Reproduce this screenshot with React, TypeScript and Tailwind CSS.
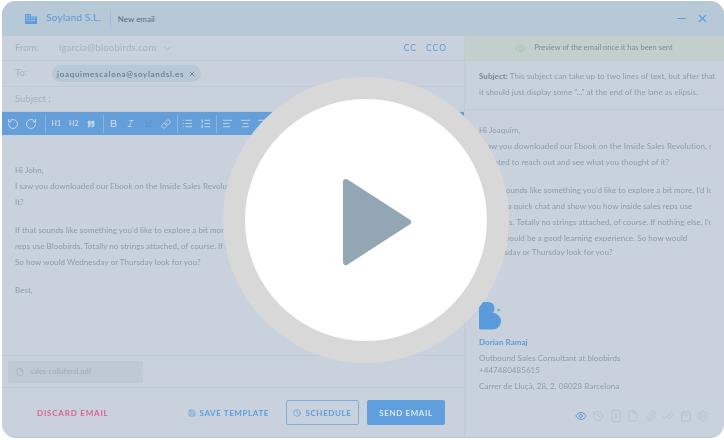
import {
  AlignCenter,
  AlignLeft,
  AlignRight,
  Bold,
  Calendar,
  CheckCheck,
  ChevronDown,
  Clock,
  Eye,
  File,
  History,
  Italic,
  Link,
  List,
  ListOrdered,
  Minus,
  Paperclip,
  Quote,
  RotateCcw,
  RotateCw,
  Save,
  Settings,
  Underline,
  X,
} from 'lucide-react';

function CompanyIcon() {
  return (
    <svg width="12" height="12" viewBox="0 0 12 12" className="text-[#5b9ddd]" fill="currentColor">
      <path d="M0 1h6v2.500h6V11H0zM1.200 2.200v1.200h1.200V2.200zm2.400 0v1.200h1.200V2.200zM1.200 4.600v1.200h1.200V4.600zm2.400 0v1.200h1.200V4.600zm2.600 0v1.200h1.400V4.600zm2.600 0v1.200h1.200V4.600zM1.200 7v1.200h1.200V7zm2.400 0v1.200h1.200V7zm2.600 0v1.200h1.400V7zm2.600 0v1.200h1.200V7z" fillRule="evenodd" />
    </svg>
  );
}

function Logo() {
  return (
    <svg width="23" height="28" viewBox="0 0 23 28">
      <path d="M1 0H9C13 0 15.500 3 15.500 6C15.500 8 15 9.500 14 10.700C19 11.500 22 15 22 19C22 24 18 27.500 13 27.500H1.500A1.500 1.500 0 0 1 0 26V1A1 1 0 0 1 1 0Z" fill="#5a9bdc" />
      <circle cx="19.700" cy="8" r="1.500" fill="#62bfd0" />
    </svg>
  );
}

function DollarFile() {
  return (
    <svg width="12" height="12" viewBox="0 0 12 12" fill="none" stroke="currentColor" strokeWidth="1">
      <rect x="2" y="0.500" width="8" height="11" rx="1" />
      <path d="M7.200 4.300C7 3.800 6.500 3.500 6 3.500C5.300 3.500 4.800 3.900 4.800 4.500C4.800 5.900 7.300 5.200 7.300 6.800C7.300 7.500 6.700 7.900 6 7.900C5.400 7.900 4.900 7.600 4.700 7.100M6 2.800V8.800" strokeWidth="0.700" />
    </svg>
  );
}

function Sep({ className }: { className: string }) {
  return <span className={`h-[18px] w-px shrink-0 bg-[#8bb6e0] ${className}`} />;
}

function Cell({ children, className }: { children: React.ReactNode; className?: string }) {
  return <span className={`flex w-[17.5px] shrink-0 items-center justify-center ${className ?? ''}`}>{children}</span>;
}

function Row({ children, className }: { children: React.ReactNode; className: string }) {
  return <div className={`flex items-center border-b border-[#c1cbd6] ${className}`}>{children}</div>;
}

export default function App() {
  return (
    <div className="relative h-[440px] w-[724px] overflow-hidden bg-white font-['Lato',sans-serif]">
      <div className="ml-[2px] mt-px flex h-[437px] w-[722px] flex-col overflow-hidden rounded-[14px] border-b border-[#bcc7d2] bg-[#c9d2dc] blur-[0.35px]">
        {/* Header */}
        <div className="flex h-[35px] shrink-0 items-center bg-[#b7c8d6] pr-[15px]">
          <div className="ml-[23px] mr-[9px]">
            <CompanyIcon />
          </div>
          <span className="mb-[4px] text-[10px] leading-none tracking-[0.2px] text-[#5b9ddd]">Soyland S.L.</span>
          <span className="ml-[9px] mr-[7px] h-[16px] w-px bg-[#9fbcd6]" />
          <span className="text-[8px] text-[#5c6c7c]">New email</span>
          <Minus className="ml-auto h-[13px] w-[13px] text-[#5b9ddd]" strokeWidth={2} />
          <X className="ml-[8px] h-[13px] w-[13px] text-[#5b9ddd]" strokeWidth={2} />
        </div>

        <div className="flex min-h-0 flex-1">
          {/* Compose column */}
          <div className="flex w-[462px] shrink-0 flex-col">
            <Row className="h-[25px] text-[9.500px] text-[#a5b1bd]">
              <span className="ml-[13px] w-[44px]">From:</span>
              <span className="tracking-[0.2px]">igarcia@bloobirds.com</span>
              <ChevronDown className="ml-[6px] h-[11px] w-[11px]" />
              <span className="ml-auto text-[8.500px] tracking-[1px] text-[#5b9ddd]">CC</span>
              <span className="ml-[9px] mr-[17px] text-[8.500px] tracking-[1px] text-[#5b9ddd]">CCO</span>
            </Row>
            <Row className="h-[26px] text-[9.500px] text-[#a5b1bd]">
              <span className="ml-[13px] w-[37px]">To:</span>
              <span className="flex h-[17px] items-center gap-[4px] rounded-full bg-[#b7c8d6] px-[5px] text-[8px] font-semibold tracking-[0.7px] text-[#6b7b8d]">
                joaquimescalona@soylandsl.es
                <X className="h-[8px] w-[8px]" strokeWidth={2.500} />
              </span>
            </Row>
            <Row className="h-[25px] text-[9.500px] text-[#a5b1bd]">
              <span className="ml-[13px]">Subject :</span>
            </Row>

            {/* Toolbar */}
            <div className="flex h-[23px] shrink-0 items-center bg-[#649fd9] pl-[2px] text-[#c4d7ea]">
              <span className="flex w-[18px] shrink-0 justify-center">
                <RotateCcw className="h-[12px] w-[12px]" />
              </span>
              <span className="flex w-[18px] shrink-0 justify-center">
                <RotateCw className="h-[12px] w-[12px]" />
              </span>
              <Sep className="ml-[4.500px] mr-[2px]" />
              <Cell className="text-[7px] font-bold">H1</Cell>
              <Cell className="text-[7px] font-bold">H2</Cell>
              <Cell>
                <Quote className="h-[8px] w-[8px]" fill="currentColor" />
              </Cell>
              <Sep className="ml-[2.500px] mr-px" />
              <Cell>
                <Bold className="h-[9px] w-[9px]" strokeWidth={3} />
              </Cell>
              <Cell>
                <Italic className="h-[9px] w-[9px]" />
              </Cell>
              <Cell>
                <Underline className="h-[9px] w-[9px] text-[#5a93cf]" />
              </Cell>
              <Cell>
                <Link className="h-[10px] w-[10px]" />
              </Cell>
              <Sep className="ml-[2.500px] mr-px" />
              <Cell>
                <List className="h-[11px] w-[11px]" />
              </Cell>
              <Cell>
                <ListOrdered className="h-[11px] w-[11px]" />
              </Cell>
              <Sep className="ml-[2px] mr-[2px]" />
              <Cell>
                <AlignLeft className="h-[11px] w-[11px]" />
              </Cell>
              <Cell>
                <AlignCenter className="h-[11px] w-[11px]" />
              </Cell>
              <Cell>
                <AlignRight className="h-[11px] w-[11px]" />
              </Cell>
            </div>

            {/* Body */}
            <div className="min-h-0 flex-1 overflow-hidden whitespace-nowrap pl-[13px] pt-[27px] text-[8px] leading-[16px] tracking-[0.05px] text-[#8e9ba9]">
              <p>Hi John,</p>
              <p>I saw you downloaded our Ebook on the Inside Sales Revolution, so I wanted</p>
              <p>It?</p>
              <p className="mt-[12px]">If that sounds like something you'd like to explore a bit more, I'd love</p>
              <p>reps use Bloobirds. Totally no strings attached, of course. If nothing else</p>
              <p>So how would Wednesday or Thursday look for you?</p>
              <p className="mt-[12px]">Best,</p>
            </div>

            {/* Attachment */}
            <div className="flex h-[33px] shrink-0 items-center border-y border-[#c1cbd6] pl-[6px]">
              <div className="flex h-[22px] w-[135px] items-center gap-[6px] rounded-[2px] bg-[#bfc9d3] pl-[8px] text-[7.500px] text-[#a1adb9]">
                <File className="h-[8px] w-[8px]" />
                sales-collateral.pdf
              </div>
            </div>

            {/* Footer */}
            <div className="flex h-[49px] shrink-0 items-center text-[8px] font-bold tracking-[0.6px]">
              <span className="ml-[35px] tracking-[0.8px] text-[#d8648f]">DISCARD EMAIL</span>
              <span className="ml-[79px] flex items-center gap-[4px] text-[#5b9ddd]">
                <Save className="h-[8px] w-[8px]" />
                SAVE TEMPLATE
              </span>
              <span className="ml-[17px] flex h-[25px] w-[73px] items-center justify-center gap-[4px] rounded-[2px] border border-[#7eaede] text-[#5b9ddd]">
                <Clock className="h-[8px] w-[8px]" />
                SCHEDULE
              </span>
              <span className="ml-[8px] flex h-[25px] w-[78px] items-center justify-center rounded-[2px] bg-[#5f9fdd] text-[#dce8f3]">
                SEND EMAIL
              </span>
            </div>
          </div>

          {/* Preview column */}
          <div className="flex min-w-0 flex-1 flex-col border-l border-[#c1cbd6]">
            <div className="flex h-[25px] shrink-0 items-center justify-center gap-[8px] border-b border-[#bfcdcb] bg-[#c2cfcd] pr-[1px] text-[7.500px] text-[#7e8d98]">
              <Eye className="h-[11px] w-[11px] text-[#a5c4a6]" />
              Preview of the email once it has been sent
            </div>
            <div className="h-[49px] shrink-0 whitespace-nowrap border-b border-[#c1cbd6] pl-[14px] pt-[7px] text-[8px] leading-[16px] tracking-[0.05px] text-[#8e9ba9]">
              <p>
                <span className="font-bold text-[#77858f]">Subject:</span> This subject can take up to two lines of text, but after that
              </p>
              <p>it should just display some "..." at the end of the lane as elipsis.</p>
            </div>
            <div className="min-h-0 flex-1 overflow-hidden pl-[14px] pt-[12px] text-[8px] leading-[16px] tracking-[0.05px] text-[#8e9ba9]">
              <div className="w-[232px] overflow-hidden whitespace-nowrap">
                <p>Hi Joaquim,</p>
                <p>I saw you downloaded our Ebook on the Inside Sales Revolution, so</p>
                <p>I wanted to reach out and see what you thought of it?</p>
                <p className="mt-[12px]">If that sounds like something you'd like to explore a bit more, I'd love</p>
                <p>to have a quick chat and show you how inside sales reps use</p>
                <p>Bloobirds. Totally no strings attached, of course. If nothing else, I'm</p>
                <p>sure it would be a good learning experience. So how would</p>
                <p className="leading-[12px]">Wednesday or Thursday look for you?</p>
              </div>
              <p className="mt-[23px] text-[6px] leading-[8px]">--</p>
              <div className="mt-[13px] h-[28px]">
                <Logo />
              </div>
              <p className="mt-[4px] font-bold text-[#5b9ddd]">Dorian Ramaj</p>
              <p>Outbound Sales Consultant at bloobirds</p>
              <p className="leading-[8px]">+447480485615</p>
              <p className="mt-[4px]">Carrer de Lluçà, 28, 2, 08028 Barcelona</p>
              <div className="mt-[16px] flex items-center justify-end gap-[5.500px] pr-[15px] text-[#b3c2d0]">
                <Eye className="h-[12px] w-[12px] text-[#5b9ddd]" />
                <History className="h-[12px] w-[12px]" />
                <DollarFile />
                <File className="h-[12px] w-[12px]" />
                <Paperclip className="h-[12px] w-[12px]" />
                <CheckCheck className="h-[12px] w-[12px]" />
                <Calendar className="h-[12px] w-[12px]" />
                <Settings className="h-[12px] w-[12px]" />
              </div>
            </div>
          </div>
        </div>
      </div>

      {/* Play overlay */}
      <div className="absolute left-[223px] top-[77px] flex h-[286px] w-[286px] items-center justify-center rounded-full border-[22px] border-[#d8d8d8] bg-white">
        <svg width="70" height="88" viewBox="0 0 70 88" className="ml-[22px] mt-[4px]">
          <path d="M4 4 L66 44 L4 84 Z" fill="#93a6b4" stroke="#93a6b4" strokeWidth="6" strokeLinejoin="round" />
        </svg>
      </div>
    </div>
  );
}
